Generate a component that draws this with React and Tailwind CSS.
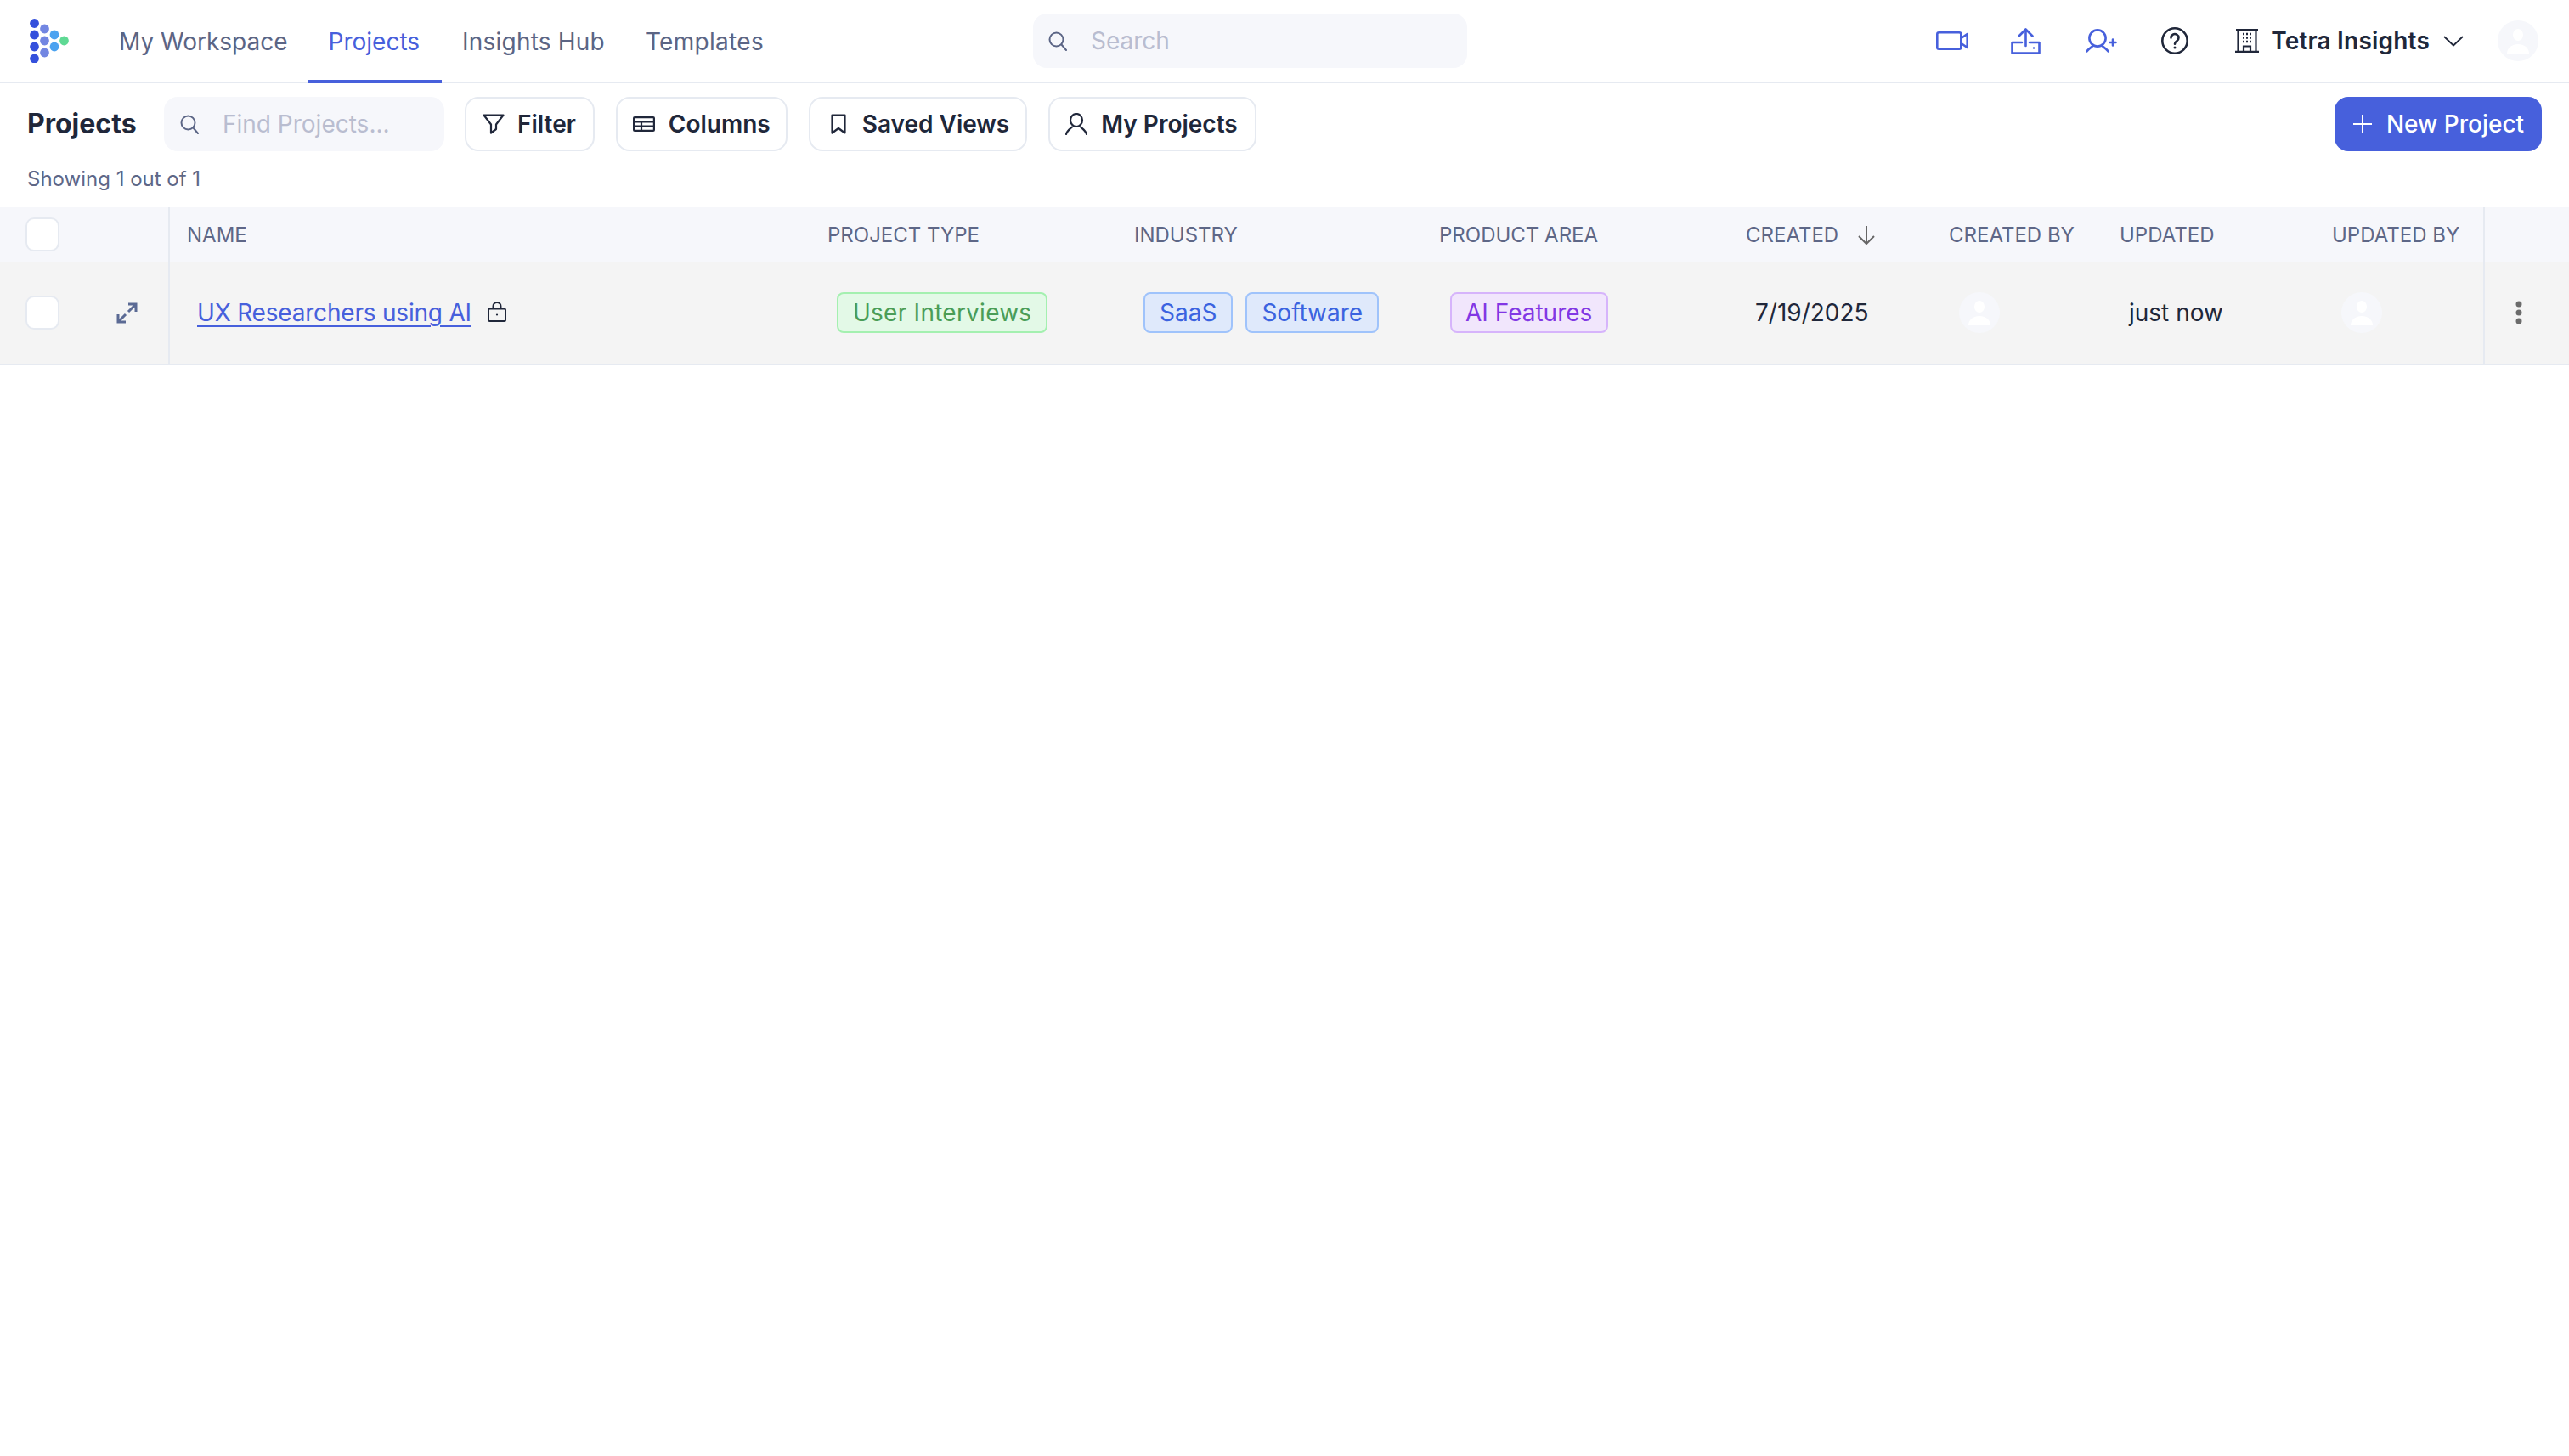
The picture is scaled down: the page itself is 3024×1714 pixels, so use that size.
import React from 'react';

const COLS = 'grid grid-cols-[200px_754px_361px_359px_361px_239px_201px_250px_199px_100px]';

function Logo() {
  const dots = [
    [5.5, 5.5, '#3450dc'], [5.5, 19, '#3450dc'], [5.5, 33, '#3450dc'], [5.5, 47, '#3450dc'],
    [17.5, 12, '#7286e2'], [17.5, 26, '#7286e2'], [17.5, 40, '#7286e2'],
    [29, 19, '#4ba3f0'], [29, 33, '#4ba3f0'],
    [40.5, 26, '#5fd994'],
  ];
  return (
    <svg width="46" height="52" viewBox="0 0 46 52" className="ml-[35px] shrink-0">
      {dots.map(([x, y, c], i) => <circle key={i} cx={x} cy={y} r="5.4" fill={c} />)}
    </svg>
  );
}

function SearchIcon({ className }) {
  return (
    <svg width="24" height="24" viewBox="0 0 24 24" fill="none" stroke="currentColor" strokeWidth="2" strokeLinecap="round" className={className}>
      <circle cx="10.5" cy="10.5" r="8" />
      <path d="M16.5 16.5L22 23" />
    </svg>
  );
}

function Avatar() {
  return (
    <div className="w-12 h-12 rounded-full bg-[#f6f7fb] flex items-center justify-center shrink-0">
      <svg width="26" height="30" viewBox="0 0 26 30" fill="#ffffff">
        <ellipse cx="13" cy="8" rx="6" ry="7" />
        <path d="M0 30c0-6 5-11 13-11s13 5 13 11z" />
      </svg>
    </div>
  );
}

function Tab({ label, active, className }) {
  return (
    <a className={`h-[98px] -mb-[2px] pl-6 flex items-center text-[28px] border-b-4 border-t-4 border-t-transparent ${className} ${active ? 'text-[#4760dc] border-[#4760dc] border-t-transparent' : 'text-[#5b6585] border-transparent'}`}>
      {label}
    </a>
  );
}

function ToolButton({ icon, label, className }) {
  return (
    <button className={`h-16 flex items-center border-2 border-[#e6eaf1] rounded-2xl text-[28px] font-semibold text-[#20273a] ${className}`}>
      {icon}
      {label}
    </button>
  );
}

function Badge({ label, className }) {
  return <span className={`h-12 flex items-center border-2 rounded-lg text-[28px] ${className}`}>{label}</span>;
}

function Checkbox() {
  return <div className="w-10 h-10 rounded-[10px] border-2 border-[#e6eaf1] bg-white" />;
}

function Header({ label, children }) {
  return (
    <div className="pl-5 pt-[2px] flex items-center text-[24px] text-[#5e6787] whitespace-nowrap">
      {label}
      {children}
    </div>
  );
}

export default function App() {
  return (
    <div className="min-h-screen bg-white font-['Inter',sans-serif]">
      <div className="h-[98px] flex items-center border-b-2 border-[#e6eaf1]">
        <Logo />
        <nav className="flex ml-[35px]">
          <Tab label="My Workspace" className="pr-6" />
          <Tab label="Projects" active className="pr-[26px]" />
          <Tab label="Insights Hub" className="pr-6 tracking-[0.2px]" />
          <Tab label="Templates" className="pr-[22px] tracking-[0.3px]" />
        </nav>
        <div className="ml-[295px] w-[511px] h-16 rounded-2xl bg-[#f6f7fb] flex items-center pl-[17px] gap-[27px]">
          <SearchIcon className="text-[#5b6585]" />
          <span className="text-[28px] text-[#b9bdd0]">Search</span>
        </div>
        <div className="ml-auto flex items-center pr-9 text-[#4760dc]">
          <svg width="38" height="22" viewBox="0 0 38 22" fill="none" stroke="currentColor" strokeWidth="2.6" strokeLinejoin="round">
            <rect x="1.3" y="1.3" width="28" height="19.4" rx="2" />
            <path d="M29.5 8L36.7 3v16l-7.2-5" />
          </svg>
          <svg width="35" height="31" viewBox="0 0 35 31" fill="none" stroke="currentColor" strokeWidth="2.6" strokeLinecap="round" strokeLinejoin="round" className="ml-[50px]">
            <path d="M13 17H1.5v12.5h32V17H22" />
            <path d="M17.5 21V2M9.5 9.5l8-8 8 8" />
            <circle cx="27" cy="23.5" r="1.2" fill="currentColor" stroke="none" />
          </svg>
          <svg width="37" height="28" viewBox="0 0 37 28" fill="none" stroke="currentColor" strokeWidth="2.6" strokeLinecap="round" className="ml-[53px]">
            <circle cx="14" cy="11" r="9.6" />
            <path d="M1.3 26.5C3 24 5.500 22.500 8 20.500M20 20.500c2.500 2 5 3.500 6.700 6" />
            <path d="M28.500 16h7M32 12.500v7" />
          </svg>
          <svg width="32" height="32" viewBox="0 0 32 32" fill="none" stroke="#20273a" strokeWidth="2.6" strokeLinecap="round" className="ml-[52px]">
            <circle cx="16" cy="16" r="14.700" />
            <path d="M11.500 12.500a4.500 4.500 0 1 1 6.800 3.900c-1.500.9-2.300 1.700-2.300 3.300" />
            <circle cx="16" cy="24" r="1.500" fill="#20273a" stroke="none" />
          </svg>
          <svg width="28" height="28" viewBox="0 0 28 28" fill="none" stroke="#20273a" strokeWidth="2.200" className="ml-[55px]">
            <path d="M1 1.100h26M0 26.900h28M3.500 1v26M24.500 1v26" />
            <path d="M10 27v-6.500h8V27" />
            <path d="M9 6h2M13 6h2M17 6h2M9 10.500h2M13 10.500h2M17 10.500h2M9 15h2M13 15h2M17 15h2" strokeWidth="2.400" />
          </svg>
          <span className="ml-[14px] text-[28px] font-semibold tracking-[0.2px] text-[#20273a]">Tetra Insights</span>
          <svg width="24" height="13" viewBox="0 0 24 13" fill="none" stroke="#20273a" strokeWidth="1.800" strokeLinecap="round" strokeLinejoin="round" className="ml-4">
            <path d="M1.500 1.500L12 11.500 22.500 1.500" />
          </svg>
          <div className="ml-10"><Avatar /></div>
        </div>
      </div>

      <div className="mt-4 px-8 flex items-center h-16">
        <h1 className="text-[32px] font-bold text-[#20273a] w-[161px] shrink-0">Projects</h1>
        <div className="w-[330px] h-16 rounded-2xl bg-[#f6f7fb] flex items-center pl-[18px] gap-[27px]">
          <SearchIcon className="text-[#5b6585]" />
          <span className="text-[28px] text-[#b9bdd0]">Find Projects...</span>
        </div>
        <div className="ml-6 flex gap-[25px]">
          <ToolButton label="Filter" className="pl-[19px] pr-5 gap-[15px]" icon={
            <svg width="26" height="24" viewBox="0 0 26 24" fill="none" stroke="#20273a" strokeWidth="2.200" strokeLinejoin="round">
              <path d="M1.500 1.500h23L16 12.500v5.500l-6 4.500V12.500z" />
            </svg>
          } />
          <ToolButton label="Columns" className="pl-[18px] pr-[18px] gap-4" icon={
            <svg width="26" height="18" viewBox="0 0 26 18" fill="none" stroke="#20273a" strokeWidth="2.200">
              <rect x="1.100" y="1.100" width="23.800" height="15.800" rx="1" />
              <path d="M1 6.500h24M1 11.500h24M10 6.500V17" />
            </svg>
          } />
          <ToolButton label="Saved Views" className="pl-6 pr-[19px] gap-[19px]" icon={
            <svg width="18" height="24" viewBox="0 0 18 24" fill="none" stroke="#20273a" strokeWidth="2.200" strokeLinejoin="round">
              <path d="M1.500 1.500h15v21L9 17l-7.500 5.500z" />
            </svg>
          } />
          <ToolButton label="My Projects" className="pl-[18px] pr-5 gap-4" icon={
            <svg width="26" height="26" viewBox="0 0 26 26" fill="none" stroke="#20273a" strokeWidth="2.200" strokeLinecap="round">
              <ellipse cx="13" cy="8.500" rx="7" ry="7.500" />
              <path d="M1 25c1-4 4-6 7-8.500M25 25c-1-4-4-6-7-8.500" />
            </svg>
          } />
        </div>
        <button className="ml-auto h-16 w-[244px] rounded-2xl bg-[#4760dc] text-white text-[28px] font-medium flex items-center justify-center gap-4">
          <svg width="24" height="24" viewBox="0 0 24 24" fill="none" stroke="currentColor" strokeWidth="2">
            <path d="M12 1v22M1 12h22" />
          </svg>
          New Project
        </button>
      </div>

      <p className="pl-8 mt-[18px] h-[30px] leading-[30px] text-[24px] text-[#5e6787]">Showing 1 out of 1</p>

      <div className="mt-[18px]">
        <div className={`${COLS} h-16 bg-[#f6f7fb]`}>
          <div className="pl-[30px] flex items-center border-r-2 border-[#e6eaf1]"><Checkbox /></div>
          <Header label="NAME" />
          <Header label="PROJECT TYPE" />
          <Header label="INDUSTRY" />
          <Header label="PRODUCT AREA" />
          <Header label="CREATED">
            <svg width="22" height="24" viewBox="0 0 22 24" fill="none" stroke="#666" strokeWidth="2" className="ml-[22px]">
              <path d="M11 1v21M2 13l9 9 9-9" />
            </svg>
          </Header>
          <Header label="CREATED BY" />
          <Header label="UPDATED" />
          <Header label="UPDATED BY" />
          <div className="border-l-2 border-[#e6eaf1] -ml-px" />
        </div>
        <div className={`${COLS} h-[122px] bg-[#f4f4f4] border-b-2 border-[#e6eaf1] text-[28px] text-[#20273a]`}>
          <div className="pl-[30px] flex items-center border-r-2 border-[#e6eaf1]">
            <Checkbox />
            <svg width="25" height="25" viewBox="0 0 25 25" fill="none" stroke="#5b6a94" strokeWidth="3" className="ml-[67px]">
              <path d="M14 11L23 2M14 2h9v9M11 14L2 23M2 14v9h9" />
            </svg>
          </div>
          <div className="pl-[32px] flex items-center gap-[19px]">
            <a className="text-[#4760dc] underline underline-offset-[5px] decoration-2 tracking-[-0.2px]">UX Researchers using AI</a>
            <svg width="22" height="24" viewBox="0 0 22 24" fill="none" stroke="#20273a" strokeWidth="2" className="-mt-[2px]">
              <rect x="1" y="8.500" width="20" height="14.500" rx="1.500" />
              <path d="M6.500 8.500V5.500a4.500 4.500 0 0 1 9 0V8.500" />
              <circle cx="11" cy="15.500" r="1.100" fill="#20273a" stroke="none" />
            </svg>
          </div>
          <div className="pl-[31px] flex items-center">
            <Badge label="User Interviews" className="px-[17px] tracking-[0.25px] bg-[#e3f9e7] border-[#a4f0b0] text-[#4a9d57]" />
          </div>
          <div className="pl-[31px] flex items-center gap-[15px]">
            <Badge label="SaaS" className="px-[17px] bg-[#dfe9fb] border-[#9fc3fb] text-[#3b63e0]" />
            <Badge label="Software" className="px-[17px] bg-[#dfe9fb] border-[#9fc3fb] text-[#3b63e0]" />
          </div>
          <div className="pl-[33px] flex items-center">
            <Badge label="AI Features" className="pl-4 pr-[17px] bg-[#f1e6fc] border-[#d6b4fb] text-[#8237e4]" />
          </div>
          <div className="pl-[31px] flex items-center">7/19/2025</div>
          <div className="pl-8 flex items-center"><Avatar /></div>
          <div className="pl-[31px] flex items-center">just now</div>
          <div className="pl-[31px] flex items-center"><Avatar /></div>
          <div className="border-l-2 border-[#e6eaf1] -ml-px flex items-center pl-[36px]">
            <svg width="8" height="28" viewBox="0 0 8 28" fill="#6b6b6b">
              <circle cx="4" cy="4" r="3.500" />
              <circle cx="4" cy="14" r="3.500" />
              <circle cx="4" cy="24" r="3.500" />
            </svg>
          </div>
        </div>
      </div>
    </div>
  );
}
